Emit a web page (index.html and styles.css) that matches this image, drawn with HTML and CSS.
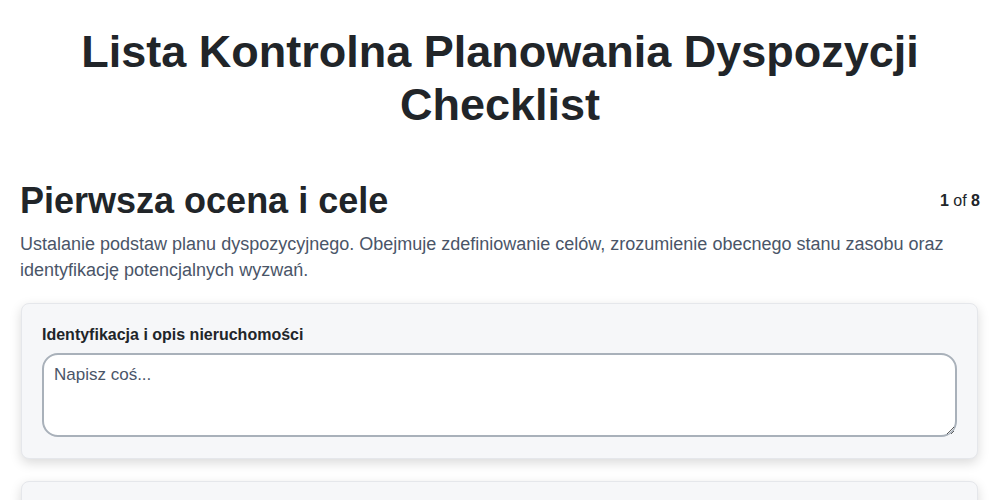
FILE: index.html
```html
<!DOCTYPE html>
<html lang="pl">
<head>
    <meta charset="UTF-8">
    <meta name="viewport" content="width=device-width, initial-scale=1.0">
    <title>Lista Kontrolna Planowania Dyspozycji Checklist</title>
    <link rel="stylesheet" href="styles.css">
</head>
<body>
    <div class="container">
        <h1>Lista Kontrolna Planowania Dyspozycji Checklist</h1>

        <div class="step">
            <div class="step-header">
                <h2>Pierwsza ocena i cele</h2>
                <span class="step-count"><strong>1</strong> of <strong>8</strong></span>
            </div>
            <p class="step-desc">Ustalanie podstaw planu dyspozycyjnego. Obejmuje zdefiniowanie celów, zrozumienie obecnego stanu zasobu oraz identyfikację potencjalnych wyzwań.</p>

            <div class="card">
                <label class="card-label" for="q1">Identyfikacja i opis nieruchomości</label>
                <textarea id="q1" class="field" placeholder="Napisz coś..."></textarea>
            </div>

            <div class="card">
                <label class="card-label" for="q2">Określenie celów dyspozycji</label>
                <textarea id="q2" class="field" placeholder="Napisz coś..."></textarea>
            </div>
        </div>
    </div>
</body>
</html>
```

FILE: styles.css
```css
body {
    font-family: 'Liberation Sans', Arial, sans-serif;
    margin: 0;
    padding: 0;
    background: #fff;
    color: #212529;
}
.container {
    padding: 25px 20px 20px;
}
h1 {
    margin: 0 0 48px;
    font-size: 45px;
    line-height: 53px;
    text-align: center;
    color: #212529;
}
.step-header {
    display: flex;
    justify-content: space-between;
    align-items: center;
}
h2 {
    margin: 0;
    font-size: 36px;
    line-height: 1.2;
    color: #212529;
}
.step-count {
    font-size: 16px;
    color: #212529;
}
.step-desc {
    margin: 9px 0 20px;
    font-size: 18px;
    line-height: 26px;
    color: #4a5568;
}
.card {
    margin: 0 2px 22px 1px;
    padding: 20px 20px 21px;
    background: #f6f7f9;
    border: 1px solid #e5e7eb;
    border-radius: 8px;
    box-shadow: 0 4px 12px rgba(0, 0, 0, 0.15);
}
.card-label {
    display: block;
    margin-bottom: 8px;
    font-size: 16px;
    font-weight: bold;
    line-height: 21px;
    color: #212529;
}
.field {
    display: block;
    box-sizing: border-box;
    width: 100%;
    height: 84px;
    padding: 8px 10px;
    border: 2px solid #a9b1ba;
    border-radius: 16px;
    background: #fff;
    font-family: 'Liberation Sans', Arial, sans-serif;
    font-size: 17px;
    line-height: 24px;
    color: #212529;
}
.field::placeholder {
    color: #4a5568;
}
```
